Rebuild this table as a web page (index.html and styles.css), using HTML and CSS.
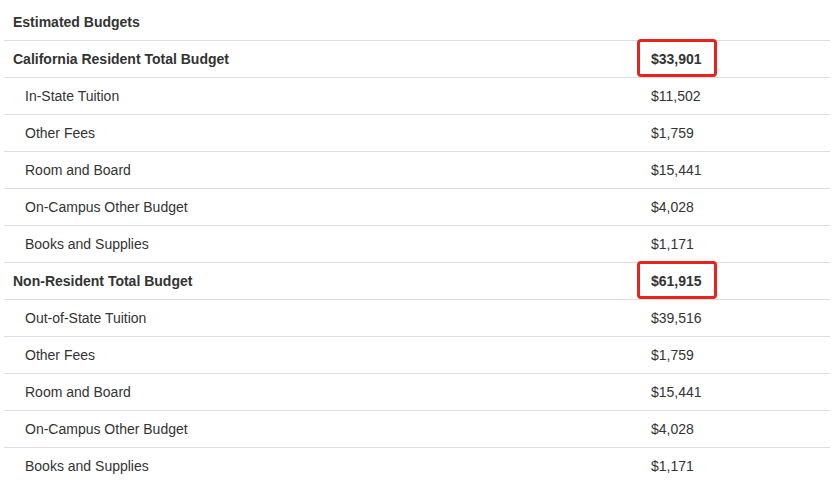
FILE: index.html
```html
<!DOCTYPE html>
<html>
<head>
<meta charset="utf-8">
<link rel="stylesheet" href="styles.css">
</head>
<body>
<div class="table">
  <div class="row head"><div class="label">Estimated Budgets</div><div class="val"></div></div>
  <div class="row total"><div class="label">California Resident Total Budget</div><div class="val hl">$33,901</div></div>
  <div class="row item"><div class="label">In-State Tuition</div><div class="val">$11,502</div></div>
  <div class="row item"><div class="label">Other Fees</div><div class="val">$1,759</div></div>
  <div class="row item"><div class="label">Room and Board</div><div class="val">$15,441</div></div>
  <div class="row item"><div class="label">On-Campus Other Budget</div><div class="val">$4,028</div></div>
  <div class="row item"><div class="label">Books and Supplies</div><div class="val">$1,171</div></div>
  <div class="row total"><div class="label">Non-Resident Total Budget</div><div class="val hl">$61,915</div></div>
  <div class="row item"><div class="label">Out-of-State Tuition</div><div class="val">$39,516</div></div>
  <div class="row item"><div class="label">Other Fees</div><div class="val">$1,759</div></div>
  <div class="row item"><div class="label">Room and Board</div><div class="val">$15,441</div></div>
  <div class="row item"><div class="label">On-Campus Other Budget</div><div class="val">$4,028</div></div>
  <div class="row item"><div class="label">Books and Supplies</div><div class="val">$1,171</div></div>
</div>
</body>
</html>
```
FILE: styles.css
```css
html, body {
  margin: 0;
  padding: 0;
  background: #fff;
}
body {
  font-family: "Liberation Sans", Arial, sans-serif;
  font-size: 14px;
  color: #333;
}
.table {
  width: 826px;
  margin: 4px 0 0 4px;
}
.row {
  display: grid;
  grid-template-columns: 633px 1fr;
  height: 36px;
  align-items: center;
  border-top: 1px solid #dddddd;
}
.row.head {
  border-top: none;
  font-weight: bold;
}
.row.total {
  font-weight: bold;
}
.label {
  padding-left: 9px;
}
.item .label {
  padding-left: 21px;
}
.val {
  padding-left: 14px;
  position: relative;
  height: 100%;
  display: flex;
  align-items: center;
}
.hl::after {
  content: "";
  position: absolute;
  left: 0;
  top: -2px;
  width: 80px;
  height: 38px;
  box-sizing: border-box;
  border: 3px solid #e8221e;
  border-radius: 4px;
}
```
